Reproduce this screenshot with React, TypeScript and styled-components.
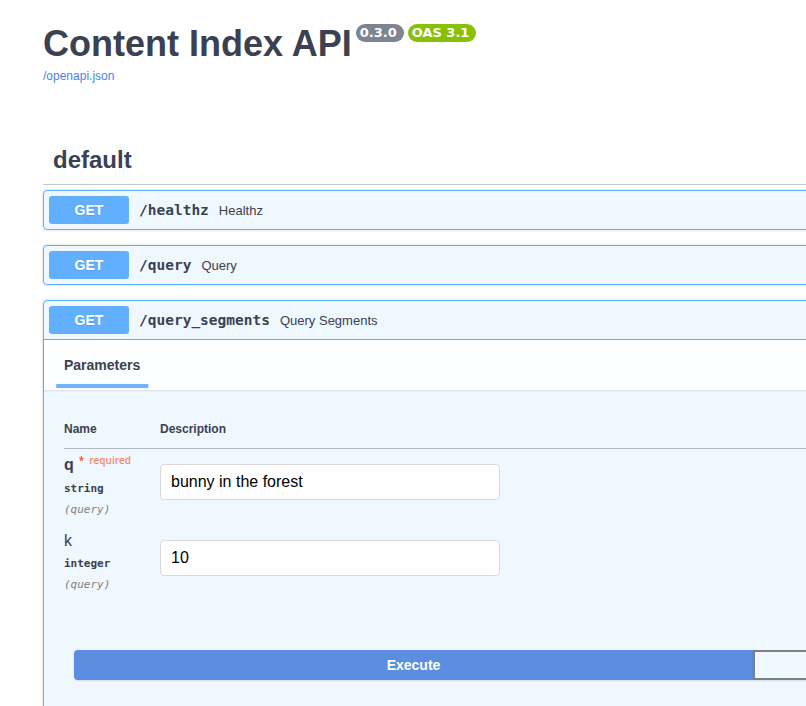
import React from 'react';
import styled, { createGlobalStyle } from 'styled-components';

const GlobalStyle = createGlobalStyle`
  html, body {
    margin: 0;
    padding: 0;
    overflow: hidden;
    background: #fff;
  }
  body {
    font-family: "Liberation Sans", Arial, sans-serif;
    color: #3b4151;
  }
`;

const Page = styled.div`
  width: 1420px;
  padding: 0 0 0 43px;
`;

const Info = styled.div`
  padding-top: 22px;
`;

const TitleRow = styled.div`
  display: flex;
  align-items: flex-start;
`;

const Title = styled.h2`
  margin: 0;
  font-size: 36px;
  line-height: 44px;
  font-weight: 700;
  color: #3b4151;
`;

const Badge = styled.span<{ $bg: string }>`
  margin: 2px 0 0 4px;
  padding: 1px 7px 2px 4px;
  border-radius: 57px;
  background: ${(p) => p.$bg};
  color: #fff;
  font-family: "DejaVu Sans", Verdana, sans-serif;
  font-size: 13px;
  line-height: 15px;
  font-weight: 700;
`;

const SpecLink = styled.a`
  display: block;
  margin-top: 3px;
  font-size: 12px;
  line-height: 14px;
  color: #4f7fe2;
  text-decoration: none;
`;

const TagHeading = styled.h3`
  margin: 53px 0 5px;
  padding: 10px 20px 10px 10px;
  font-size: 24px;
  line-height: 28px;
  font-weight: 700;
  border-bottom: 1px solid rgba(59, 65, 81, 0.3);
`;

const OpBlock = styled.div`
  margin: 0 0 15px;
  border: 1px solid #61affe;
  border-radius: 4px;
  background: rgba(97, 175, 254, 0.1);
  box-shadow: 0 0 3px rgba(0, 0, 0, 0.19);
`;

const Summary = styled.div<{ $open?: boolean }>`
  display: flex;
  align-items: center;
  padding: 5px;
  border-bottom: ${(p) => (p.$open ? '1px solid #61affe' : 'none')};
`;

const Method = styled.span`
  min-width: 80px;
  padding: 6px 0;
  border-radius: 3px;
  background: #61affe;
  color: #fff;
  text-align: center;
  font-size: 14px;
  line-height: 16px;
  font-weight: 700;
  text-shadow: 0 1px 0 rgba(0, 0, 0, 0.1);
`;

const Path = styled.span`
  padding: 0 10px;
  font-family: "DejaVu Sans Mono", "Liberation Mono", monospace;
  font-size: 14.5px;
  font-weight: 700;
  color: #3b4151;
`;

const Desc = styled.span`
  font-size: 13px;
  color: #3b4151;
`;

const SectionHeader = styled.div`
  display: flex;
  align-items: center;
  min-height: 50px;
  box-sizing: border-box;
  padding: 8px 20px;
  background: rgba(255, 255, 255, 0.8);
  box-shadow: 0 1px 2px rgba(0, 0, 0, 0.1);
`;

const TabTitle = styled.h4`
  margin: 0;
  font-size: 14px;
  line-height: 16px;
  font-weight: 700;
  color: #3b4151;

  span {
    position: relative;
  }
  span::after {
    content: '';
    position: absolute;
    bottom: -15px;
    left: 50%;
    width: 120%;
    height: 4px;
    transform: translateX(-50%);
    background: #70b2fd;
  }
`;

const TableWrap = styled.div`
  padding: 20px;
`;

const ParamGrid = styled.div`
  display: grid;
  grid-template-columns: 96px 1fr;
`;

const HeadCell = styled.div`
  padding: 12px 0;
  font-size: 12px;
  line-height: 14px;
  font-weight: 700;
  border-bottom: 1px solid rgba(59, 65, 81, 0.35);
`;

const NameCell = styled.div`
  padding: 6px 0;
`;

const ParamName = styled.div<{ $required?: boolean }>`
  font-size: 16px;
  line-height: 20px;
  font-weight: ${(p) => (p.$required ? 700 : 400)};
  color: #3b4151;
`;

const Star = styled.span`
  position: relative;
  top: -6px;
  padding: 0 0 0 5px;
  font-family: "Open Sans", sans-serif;
  font-size: 10px;
  font-weight: 600;
  color: #ee4d25;

  &::after {
    content: 'required';
    padding-left: 5px;
    color: #f2876c;
  }
`;

const ParamType = styled.div`
  padding: 6px 0 5px;
  font-family: "DejaVu Sans Mono", "Liberation Mono", monospace;
  font-size: 11px;
  line-height: 14px;
  font-weight: 700;
  color: #3b4151;
`;

const ParamIn = styled.div`
  font-family: "DejaVu Sans Mono", "Liberation Mono", monospace;
  font-size: 11px;
  line-height: 18px;
  font-style: italic;
  color: #808080;
`;

const InputCell = styled.div`
  padding-top: 15px;
`;

const TextInput = styled.input`
  display: block;
  box-sizing: border-box;
  width: 340px;
  height: 36px;
  padding: 8px 10px;
  border: 1px solid #d9d9d9;
  border-radius: 4px;
  background: #fff;
  font-family: "Liberation Sans", Arial, sans-serif;
  font-size: 16px;
  color: #000;
  outline: none;
`;

const BtnGroup = styled.div`
  display: flex;
  padding: 30px;
`;

const Btn = styled.button<{ $primary?: boolean }>`
  flex: 1 1 0;
  padding: 5px 23px;
  border: 2px solid ${(p) => (p.$primary ? '#5b8ee0' : '#808080')};
  border-radius: ${(p) => (p.$primary ? '4px 0 0 4px' : '0 4px 4px 0')};
  background: ${(p) => (p.$primary ? '#5b8ee0' : 'transparent')};
  color: ${(p) => (p.$primary ? '#fff' : '#3b4151')};
  font-family: "Liberation Sans", Arial, sans-serif;
  font-size: 14px;
  line-height: 16px;
  font-weight: 700;
  box-shadow: 0 1px 2px rgba(0, 0, 0, 0.1);
`;

const ops = [
  { path: '/healthz', desc: 'Healthz' },
  { path: '/query', desc: 'Query' },
];

export default function App() {
  return (
    <>
      <GlobalStyle />
      <Page>
        <Info>
          <TitleRow>
            <Title>Content Index API</Title>
            <Badge $bg="#7d8492">0.3.0</Badge>
            <Badge $bg="#89bf04">OAS 3.1</Badge>
          </TitleRow>
          <SpecLink href="#">/openapi.json</SpecLink>
        </Info>

        <TagHeading>default</TagHeading>

        {ops.map((op) => (
          <OpBlock key={op.path}>
            <Summary>
              <Method>GET</Method>
              <Path>{op.path}</Path>
              <Desc>{op.desc}</Desc>
            </Summary>
          </OpBlock>
        ))}

        <OpBlock>
          <Summary $open>
            <Method>GET</Method>
            <Path>/query_segments</Path>
            <Desc>Query Segments</Desc>
          </Summary>
          <SectionHeader>
            <TabTitle>
              <span>Parameters</span>
            </TabTitle>
          </SectionHeader>
          <TableWrap>
            <ParamGrid>
              <HeadCell>Name</HeadCell>
              <HeadCell>Description</HeadCell>

              <NameCell>
                <ParamName $required>
                  q<Star>*</Star>
                </ParamName>
                <ParamType>string</ParamType>
                <ParamIn>(query)</ParamIn>
              </NameCell>
              <InputCell>
                <TextInput defaultValue="bunny in the forest" />
              </InputCell>

              <NameCell>
                <ParamName>k</ParamName>
                <ParamType>integer</ParamType>
                <ParamIn>(query)</ParamIn>
              </NameCell>
              <InputCell>
                <TextInput defaultValue="10" />
              </InputCell>
            </ParamGrid>
          </TableWrap>
          <BtnGroup>
            <Btn $primary>Execute</Btn>
            <Btn>Clear</Btn>
          </BtnGroup>
        </OpBlock>
      </Page>
    </>
  );
}
